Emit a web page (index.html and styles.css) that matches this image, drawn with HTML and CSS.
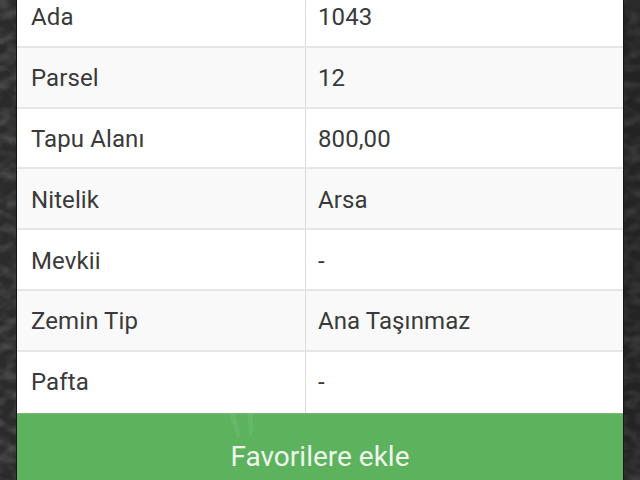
FILE: index.html
```html
<!DOCTYPE html>
<html lang="tr">
<head>
<meta charset="utf-8">
<title>Taşınmaz Bilgileri</title>
<link rel="stylesheet" href="styles.css">
</head>
<body>
<svg class="texture" aria-hidden="true" width="640" height="480">
  <filter id="grain" x="0" y="0" width="100%" height="100%">
    <feTurbulence type="fractalNoise" baseFrequency="0.07 0.11" numOctaves="3" seed="11"/>
    <feGaussianBlur stdDeviation="1"/>
    <feColorMatrix type="matrix" values="0 0 0 0 0.55  0 0 0 0 0.55  0 0 0 0 0.55  1.3 0 0 0 -0.5"/>
  </filter>
  <linearGradient id="fade" x1="0" y1="0" x2="1" y2="0">
    <stop offset="0" stop-color="#111" stop-opacity="0"/>
    <stop offset="1" stop-color="#111" stop-opacity="0.3"/>
  </linearGradient>
  <rect width="640" height="480" fill="#2b2b2c"/>
  <rect width="640" height="480" filter="url(#grain)" opacity="0.4"/>
  <rect width="640" height="480" fill="url(#fade)"/>
</svg>
<main class="panel">
  <dl class="rows">
    <div class="row"><dt class="key">Ada</dt><dd class="val">1043</dd></div>
    <div class="row alt"><dt class="key">Parsel</dt><dd class="val">12</dd></div>
    <div class="row"><dt class="key">Tapu Alanı</dt><dd class="val">800,00</dd></div>
    <div class="row alt"><dt class="key">Nitelik</dt><dd class="val">Arsa</dd></div>
    <div class="row"><dt class="key">Mevkii</dt><dd class="val">-</dd></div>
    <div class="row alt"><dt class="key">Zemin Tip</dt><dd class="val">Ana Taşınmaz</dd></div>
    <div class="row last"><dt class="key">Pafta</dt><dd class="val">-</dd></div>
  </dl>
  <button class="fav" type="button">Favorilere ekle</button>
  <svg class="mark" aria-hidden="true" width="30" height="30" viewBox="0 0 30 30">
    <path d="M1 0 L9 24 L13 24 L7 0 Z M19 0 L22 24 L25 20 L25 0 Z" fill="#fff" fill-opacity="0.07"/>
  </svg>
</main>
</body>
</html>
```
FILE: styles.css
```css
html, body {
  margin: 0;
  height: 480px;
  overflow: hidden;
  background: #2b2b2c;
}
body {
  position: relative;
  font-family: Roboto, "Liberation Sans", sans-serif;
}
.texture {
  position: absolute;
  left: 0;
  top: 0;
  display: block;
}
.panel {
  position: relative;
  margin: -13px 16px 0 16px;
  background: #fff;
  border-left: 1px solid #151515;
  border-right: 1px solid #151515;
  box-sizing: border-box;
  height: 493px;
  overflow: hidden;
}
.rows {
  margin: 0;
}
.row {
  display: grid;
  grid-template-columns: 289px 1fr;
  height: 60.8px;
  box-sizing: border-box;
  border-bottom: 2px solid #e6e6e6;
  background: #fff;
  color: #3a3a3a;
  font-size: 24px;
  letter-spacing: 0.1px;
}
.alt {
  background: #f9f9f9;
}
.last {
  border-bottom: 0;
  height: 61px;
}
.key, .val {
  margin: 0;
  padding-top: 2px;
  box-sizing: border-box;
  display: flex;
  align-items: center;
}
.last .key, .last .val {
  padding-top: 0;
}
.key {
  padding-left: 14px;
  border-right: 1px solid #dcdcdc;
}
.val {
  padding-left: 12px;
}
.fav {
  display: block;
  width: 100%;
  height: 80px;
  margin: 0;
  padding: 6px 0 0;
  border: 0;
  border-top: 1px solid #7fb47f;
  background: #5cb25d;
  color: #eef6ec;
  font-family: inherit;
  font-size: 28px;
  font-weight: 400;
  text-align: center;
}
.mark {
  position: absolute;
  left: 211px;
  top: 426px;
}
```
